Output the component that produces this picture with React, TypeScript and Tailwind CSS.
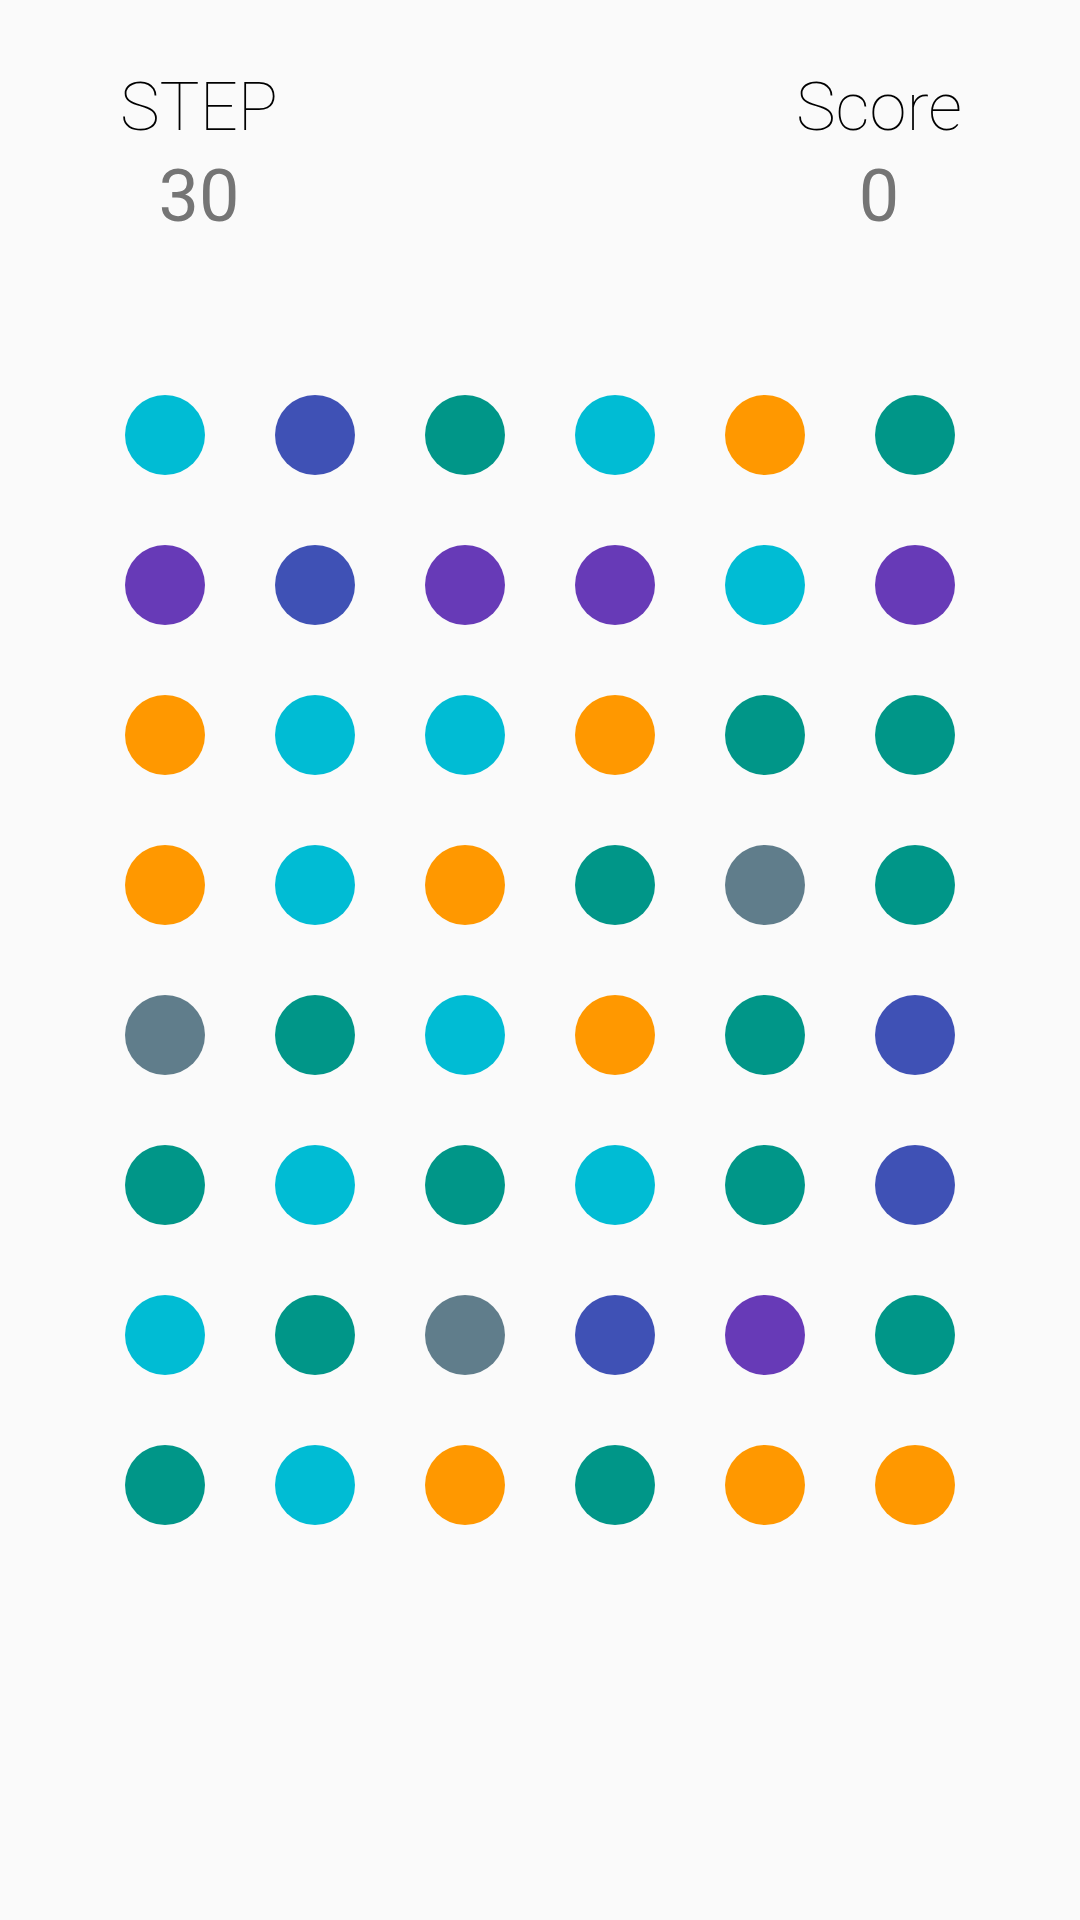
import React from "react";

const C = "bg-[#00bcd4]";
const I = "bg-[#3f51b5]";
const T = "bg-[#009688]";
const O = "bg-[#ff9800]";
const P = "bg-[#673ab7]";
const G = "bg-[#607d8b]";

const board: string[][] = [
  [C, I, T, C, O, T],
  [P, I, P, P, C, P],
  [O, C, C, O, T, T],
  [O, C, O, T, G, T],
  [G, T, C, O, T, I],
  [T, C, T, C, T, I],
  [C, T, G, I, P, T],
  [T, C, O, T, O, O],
];

const Stat = ({ label, value }: { label: string; value: number }) => (
  <div className="flex flex-col items-center">
    <p className="text-[67px] leading-none font-thin text-black">{label}</p>
    <p className="mt-[20px] text-[72px] leading-none font-normal text-[#757575]">{value}</p>
  </div>
);

export default function App() {
  return (
    <div className="w-[1080px] h-[1920px] bg-[#fafafa] font-['Roboto',sans-serif] flex flex-col">
      <div className="flex justify-between pt-[74px] pl-[120px] pr-[118px]">
        <Stat label="STEP" value={30} />
        <Stat label="Score" value={0} />
      </div>
      <div className="mt-[127px] mx-auto grid grid-cols-6 w-[900px]">
        {board.map((row, r) =>
          row.map((color, c) => (
            <div key={`${r}-${c}`} className="h-[150px] flex items-center justify-center">
              <div className={`w-[80px] h-[80px] rounded-full ${color}`} />
            </div>
          ))
        )}
      </div>
    </div>
  );
}
